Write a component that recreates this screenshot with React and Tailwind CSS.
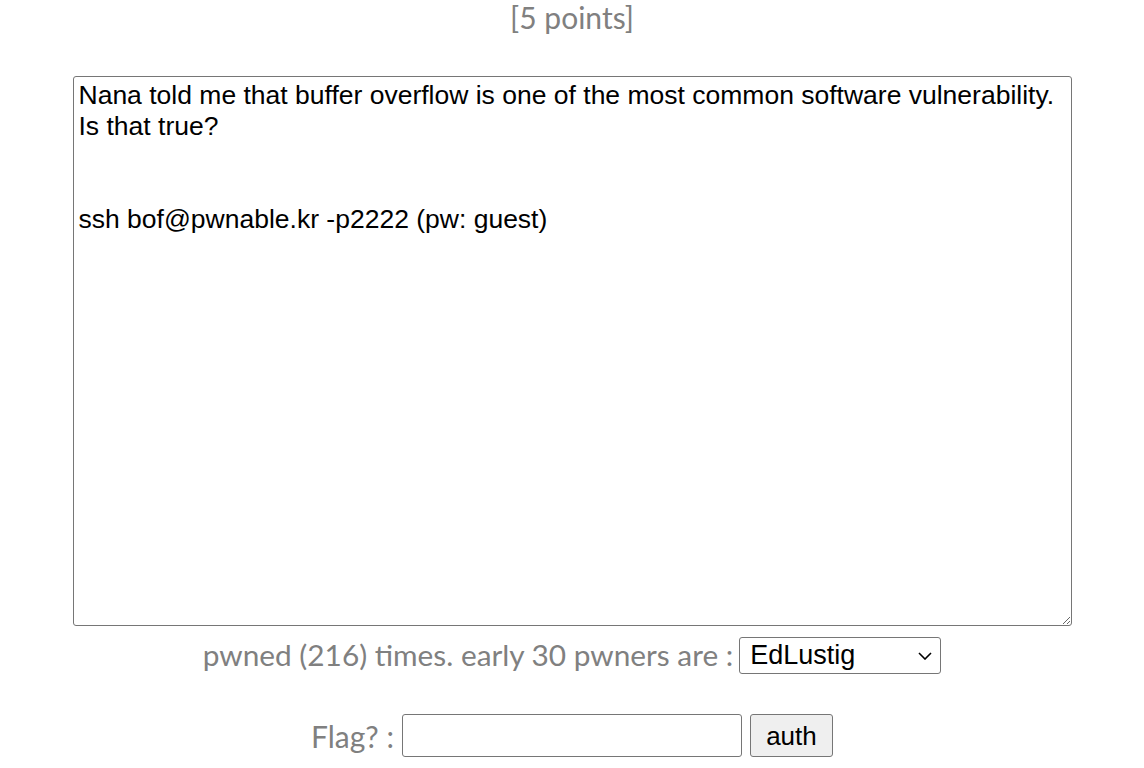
import React from "react";

export default function App() {
  const text =
    "Nana told me that buffer overflow is one of the most common software vulnerability. \nIs that true?\n\n\nssh bof@pwnable.kr -p2222 (pw: guest)\n";
  return (
    <div className="w-full min-h-[768px] bg-white flex flex-col items-center">
      <div className="mt-0 text-[30px] leading-[35px] text-[#808080] font-['Lato','Open_Sans',sans-serif]">
        [5 points]
      </div>
      <textarea
        readOnly
        defaultValue={text}
        className="mt-[41px] w-[999px] h-[550px] border border-[#767676] rounded-[3px] px-[5px] pt-[3px] text-[26.5px] leading-[31px] text-black font-['Liberation_Sans',Arial,sans-serif] resize-y outline-none"
      />
      <div className="mt-[10px] flex items-center text-[29.8px] leading-[38px] text-[#808080] font-['Lato','Open_Sans',sans-serif]">
        <span>pwned (216) times. early 30 pwners are :</span>
        <div className="relative ml-[6px]">
          <select className="appearance-none block w-[202px] h-[37px] border border-[#767676] rounded-[3px] pl-[10px] text-[27px] leading-[31px] text-black font-['Liberation_Sans',Arial,sans-serif] bg-white outline-none">
            <option>EdLustig</option>
          </select>
          <svg
            className="pointer-events-none absolute right-[9px] top-[15px]"
            width="14"
            height="8"
            viewBox="0 0 14 8"
            fill="none"
          >
            <path d="M1 1l6 6 6-6" stroke="#000" strokeWidth="1.6" />
          </svg>
        </div>
      </div>
      <div className="mt-[40px] flex items-center text-[30px] leading-[38px] text-[#808080] font-['Lato','Open_Sans',sans-serif]">
        <span>Flag? :</span>
        <input
          type="text"
          className="ml-[8px] w-[340px] h-[43px] border border-[#767676] rounded-[3px] bg-white outline-none"
        />
        <button className="ml-[8px] w-[83px] h-[43px] border border-[#767676] rounded-[3px] bg-[#efefef] text-[26px] text-black font-['Liberation_Sans',Arial,sans-serif]">
          auth
        </button>
      </div>
    </div>
  );
}
